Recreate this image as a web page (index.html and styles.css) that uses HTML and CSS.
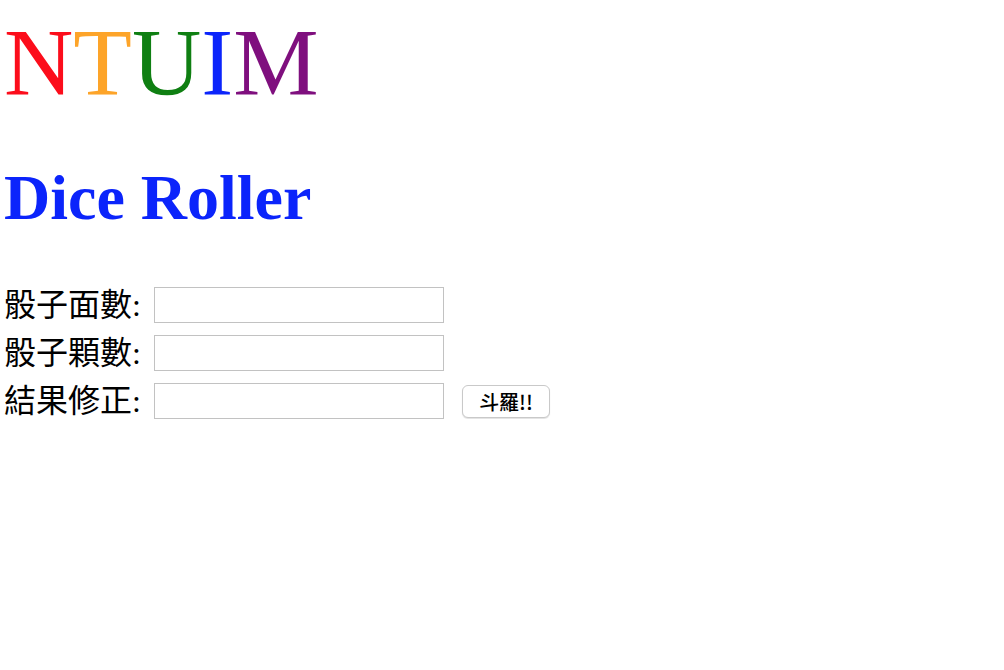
FILE: index.html
```html
<!DOCTYPE html>
<html lang="zh-Hant">
<head>
<meta charset="utf-8">
<title>Dice Roller</title>
<link rel="stylesheet" href="styles.css">
</head>
<body>
<div class="page">
  <div class="logo"><span class="c-red">N</span><span class="c-orange">T</span><span class="c-green">U</span><span class="c-blue">I</span><span class="c-purple">M</span></div>
  <h1 class="title">Dice Roller</h1>
  <form class="form">
    <label class="label" for="faces">骰子面數:</label>
    <input class="field" id="faces" type="text">
    <span></span>
    <label class="label" for="count">骰子顆數:</label>
    <input class="field" id="count" type="text">
    <span></span>
    <label class="label" for="mod">結果修正:</label>
    <input class="field" id="mod" type="text">
    <button class="roll" type="button">斗羅!!</button>
  </form>
</div>
</body>
</html>
```
FILE: styles.css
```css
html, body {
  margin: 0;
  padding: 0;
  background: #ffffff;
}

.page {
  padding: 8px 4px 0 4px;
  font-family: "Liberation Serif", "Noto Sans CJK TC", serif;
  color: #000000;
}

.logo {
  font-size: 96px;
  line-height: 110px;
  height: 110px;
  margin: 0;
}

.c-red { color: #fc0d1b; }
.c-orange { color: #fda429; }
.c-green { color: #0f7f12; }
.c-blue { color: #0b24fb; }
.c-purple { color: #7f0f7e; }

.title {
  margin: 43px 0 0 0;
  font-size: 64px;
  line-height: 74px;
  font-weight: bold;
  color: #0b24fb;
}

.form {
  margin-top: 52px;
  display: grid;
  grid-template-columns: 150px 290px auto;
  grid-auto-rows: 36px;
  row-gap: 12px;
  align-items: center;
  justify-items: start;
}

.label {
  font-family: "Liberation Serif", "Noto Sans CJK TC", serif;
  font-size: 32px;
  line-height: 36px;
  white-space: nowrap;
}

.field {
  box-sizing: border-box;
  width: 290px;
  height: 36px;
  margin: 0;
  padding: 2px 4px;
  border: 1px solid #c2c2c2;
  border-radius: 0;
  background: #ffffff;
  font-size: 16px;
  outline: none;
}

.roll {
  box-sizing: border-box;
  margin: 0 0 0 18px;
  width: 88px;
  height: 33px;
  padding: 0;
  background: #ffffff;
  border: 1px solid #c9c9c9;
  border-radius: 6px;
  box-shadow: 0 1px 1px rgba(0, 0, 0, 0.12);
  font-family: "Noto Sans CJK TC", "Noto Sans", sans-serif;
  font-size: 20px;
  font-weight: 500;
  line-height: 31px;
  color: #000000;
}
```
